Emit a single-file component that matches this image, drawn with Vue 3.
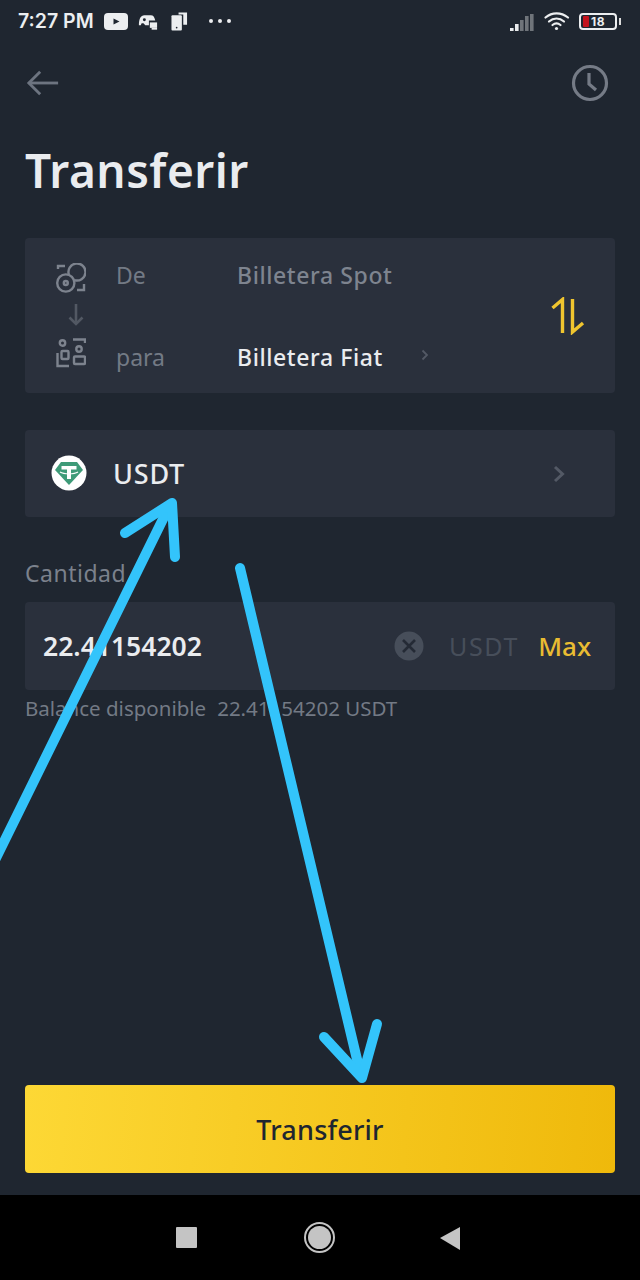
<script setup>
const signalBars = [
  { x: 0, h: 3, o: 1 },
  { x: 5, h: 7, o: 1 },
  { x: 10, h: 11, o: 0.4 },
  { x: 15, h: 15, o: 0.4 },
  { x: 20, h: 17, o: 0.4 }
]
</script>

<template>
  <div class="screen">
    <div class="app">
      <div class="status">
        <span class="time">7:27 PM</span>
        <svg class="st-yt" viewBox="0 0 24 17"><rect width="24" height="17" rx="4" fill="#eceef0"/><path d="M9.5 5.5 L15.5 8.5 L9.5 11.5Z" fill="#1f2630"/></svg>
        <svg class="st-game" viewBox="0 0 22 18"><path d="M1 13 C1 6 3 2 7 2 H14 C17 2 18 4 19 8 H12 V13 H8 L6 11 H4 L3 13Z" fill="#eceef0"/><circle cx="7" cy="7" r="1.6" fill="#1f2630"/><rect x="13" y="10" width="8" height="6" fill="#eceef0"/><path d="M15 16 V18 H21 V16Z" fill="#eceef0"/></svg>
        <svg class="st-sim" viewBox="0 0 18 20"><rect x="0.5" y="4" width="11" height="16" rx="1" fill="#eceef0"/><path d="M8 3 V1 H17 V14 H13 V3Z" fill="#eceef0"/><circle cx="6" cy="17" r="0.9" fill="#1f2630"/></svg>
        <span class="dots"><i></i><i></i><i></i></span>
        <span class="grow"></span>
        <svg class="st-signal" viewBox="0 0 25 19"><rect v-for="b in signalBars" :key="b.x" :x="b.x" :y="19 - b.h" width="3.6" :height="b.h" fill="#e8eaec" :opacity="b.o"/></svg>
        <svg class="st-wifi" viewBox="0 0 26 20" fill="none" stroke="#eceef0" stroke-width="2.2" stroke-linecap="round"><path d="M1.5 6.5 C8 1 17 1 24 6.5"/><path d="M5 10.5 C9.5 6.5 15.5 6.5 20 10.5"/><path d="M8.5 14 C11 12 14 12 16.500 14"/><circle cx="12.500" cy="17.500" r="1.600" fill="#eceef0" stroke="none"/></svg>
        <span class="battery"><span class="level"></span><span class="pct">18</span></span>
        <span class="nub"></span>
      </div>

      <div class="nav">
        <svg class="back" viewBox="0 0 36 28" fill="none" stroke="#6d7480" stroke-width="3"><path d="M34 14 H3"/><path d="M15 2 L3 14 L15 26"/></svg>
        <svg class="clock" viewBox="0 0 38 38" fill="none" stroke="#757b86" stroke-width="3.2"><circle cx="19" cy="19" r="16.500"/><path d="M18 9 V20 L25 26"/></svg>
      </div>

      <h1 class="title">Transferir</h1>

      <div class="card wallets">
        <div class="icons">
          <svg class="wicon" viewBox="0 0 30 30" fill="none" stroke="#7d838e" stroke-width="2.400">
            <path d="M13 12 A8.500 8.500 0 1 1 18.300 17.100"/>
            <circle cx="9.800" cy="20" r="8.600"/>
            <circle cx="9.800" cy="20" r="2"/>
            <path d="M2 6 V3 H9"/>
            <path d="M28 21 V27 H21"/>
          </svg>
          <svg class="warrow" viewBox="0 0 16 24" fill="none" stroke="#525863" stroke-width="2.600"><path d="M8 1 V21"/><path d="M1.500 14.500 L8 21 L14.500 14.500"/></svg>
          <svg class="wicon" viewBox="0 0 30 30" fill="none" stroke="#7d838e" stroke-width="2.400">
            <circle cx="6.500" cy="5" r="2.700"/>
            <rect x="5.500" y="13" width="7" height="8" rx="1"/>
            <circle cx="23" cy="11" r="2.700"/>
            <rect x="18" y="18.500" width="11" height="7.500" rx="1"/>
            <path d="M17 1.500 H29 V5"/>
            <path d="M1.500 15 V28 H13"/>
          </svg>
        </div>
        <div class="labels">
          <span>De</span>
          <span>para</span>
        </div>
        <div class="values">
          <span class="from">Billetera Spot</span>
          <span class="to">Billetera Fiat <svg class="chev small" viewBox="0 0 8 12" fill="none" stroke="#535965" stroke-width="1.800"><path d="M1.500 1.500 L6 6 L1.500 10.500"/></svg></span>
        </div>
        <svg class="swap" viewBox="0 0 34 38" fill="none" stroke="#f0c52f" stroke-width="3.400"><path d="M1.500 11 L11.500 2.500 V36"/><path d="M21.500 2 V35 L32 26"/></svg>
      </div>

      <div class="card coin">
        <svg class="tether" viewBox="0 0 36 36">
          <circle cx="18" cy="18" r="17.500" fill="#fff"/>
          <path d="M10 7 H26 L32 15 L18 30 L4 15Z" fill="#3e9b78"/>
          <path d="M10.500 11 H25.500 V14.500 H20 V24 H16 V14.500 H10.500Z" fill="#fff"/>
          <path d="M9 17 C13 19.500 23 19.500 27 17" fill="none" stroke="#fff" stroke-width="1.300"/>
        </svg>
        <span class="coin-name">USDT</span>
        <svg class="chev big" viewBox="0 0 12 18" fill="none" stroke="#535965" stroke-width="3"><path d="M2 2 L9.500 9 L2 16"/></svg>
      </div>

      <div class="label">Cantidad</div>
      <div class="card amount">
        <span class="amount-val">22.41154202</span>
        <span class="grow"></span>
        <svg class="clear" viewBox="0 0 30 30"><circle cx="15" cy="15" r="14.500" fill="#474e5a"/><path d="M9 9 L21 21 M21 9 L9 21" stroke="#242a35" stroke-width="2.600"/></svg>
        <span class="unit">USDT</span>
        <span class="max">Max</span>
      </div>
      <div class="balance"><span>Balance disponible</span><span>22.41154202 USDT</span></div>

      <div class="grow"></div>
      <button class="cta">Transferir</button>
    </div>

    <div class="sysnav">
      <span class="sq"></span>
      <span class="ring"><span></span></span>
      <svg class="tri" viewBox="0 0 22 24"><path d="M21 1 V24 L1 12Z" fill="#c4c4c4"/></svg>
    </div>

    <svg class="scribble" viewBox="0 0 640 1280" fill="none" stroke="#33c4fb" stroke-linecap="round" stroke-linejoin="round">
      <path d="M-6 862 L165 515" stroke-width="10"/>
      <path d="M125 533 L172 503 L175 557" stroke-width="10"/>
      <path d="M240 568 L360 1072" stroke-width="10"/>
      <path d="M324 1037 L362 1078 L377 1024" stroke-width="10"/>
    </svg>
  </div>
</template>

<style>
html, body { margin: 0; background: #000; }
</style>

<style scoped>
.screen {
  position: relative;
  width: 640px;
  height: 1280px;
  overflow: hidden;
  display: flex;
  flex-direction: column;
  font-family: "Noto Sans", "Open Sans", sans-serif;
  background: #000;
}
.app {
  height: 1195px;
  flex: none;
  box-sizing: border-box;
  background: #1f2630;
  padding: 0 25px 22px;
  display: flex;
  flex-direction: column;
}
.grow { flex: 1; }
.status {
  height: 42px;
  margin: 0 -7px;
  flex: none;
  display: flex;
  align-items: center;
  font-family: Inter, "Liberation Sans", sans-serif;
  color: #eceef0;
}
.time { font-size: 19.500px; font-weight: 600; width: 86px; white-space: nowrap; }
.st-yt { width: 24px; height: 17px; margin-right: 10px; }
.st-game { width: 20px; height: 17px; margin-right: 13px; }
.st-sim { width: 17px; height: 20px; margin-right: 21px; }
.dots { display: flex; gap: 5px; }
.dots i { width: 4px; height: 4px; border-radius: 50%; background: #eceef0; }
.st-signal { width: 25px; height: 19px; margin-right: 9px; }
.st-wifi { width: 26px; height: 20px; margin-right: 9px; }
.battery {
  box-sizing: border-box;
  width: 38px;
  height: 17px;
  border: 2px solid #eceef0;
  border-radius: 4px;
  display: flex;
  align-items: center;
  padding-left: 2px;
  gap: 2px;
}
.level { width: 6px; height: 11px; background: #c3121c; border-radius: 1px; }
.pct { font-size: 12px; font-weight: 700; letter-spacing: 0.5px; }
.nub { width: 2px; height: 7px; background: #ddd; margin-left: 2px; margin-right: 1px; }
.nav {
  height: 48px;
  margin-top: 17px;
  flex: none;
  display: flex;
  justify-content: space-between;
  align-items: center;
  padding-right: 6px;
  padding-left: 1px;
}
.back { width: 34px; height: 28px; }
.clock { width: 38px; height: 38px; }
.title {
  margin: 31px 0 0;
  font-size: 46px;
  letter-spacing: 0.5px;
  line-height: 64px;
  font-weight: 600;
  color: #eaecef;
  height: 100px;
  flex: none;
}
.card {
  background: #2a303c;
  border-radius: 4px;
  flex: none;
  display: flex;
  align-items: center;
  box-sizing: border-box;
}
.wallets { height: 155px; padding-left: 31px; padding-right: 30px; }
.icons { display: flex; flex-direction: column; align-items: center; width: 30px; }
.wicon { width: 30px; height: 30px; }
.warrow { width: 16px; height: 24px; margin: 10px 0 11px 10px; }
.labels, .values {
  display: flex;
  flex-direction: column;
  justify-content: space-between;
  height: 114px;
  font-size: 23px;
  line-height: 32px;
}
.labels { color: #737a85; width: 121px; margin-left: 30px; }
.values { font-weight: 500; flex: 1; letter-spacing: 0.6px; }
.from { color: #7e848f; }
.to { color: #eaecef; display: flex; align-items: center; }
.chev.small { width: 8px; height: 12px; margin-left: 38px; margin-top: -3px; }
.swap { width: 34px; height: 38px; }
.coin { height: 87px; margin-top: 37px; padding-left: 26px; padding-right: 50px; }
.tether { width: 36px; height: 36px; margin-top: -2px; }
.coin-name { font-size: 27px; font-weight: 500; letter-spacing: 0.8px; color: #eaecef; margin-left: 26px; flex: 1; }
.chev.big { width: 12px; height: 18px; }
.label { font-size: 23px; letter-spacing: 0.5px; line-height: 32px; color: #7b818c; margin-top: 40px; height: 45px; flex: none; }
.amount { height: 88px; padding: 0 24px 0 18px; }
.amount-val { font-size: 26.500px; font-weight: 600; color: #eaecef; }
.clear { width: 30px; height: 30px; margin-right: 25px; }
.unit { font-size: 25px; letter-spacing: 1.700px; color: #474e5a; margin-right: 19px; }
.max { font-size: 26px; font-weight: 500; color: #e9bc32; }
.balance {
  display: flex;
  gap: 11px;
  font-size: 20.500px;
  line-height: 36px;
  color: #737a85;
  flex: none;
}
.cta {
  height: 88px;
  flex: none;
  border: none;
  border-radius: 4px;
  background: linear-gradient(95deg, #fdd835 0%, #efb90b 100%);
  color: #1f2630;
  font: 500 27px "Noto Sans", sans-serif;
  letter-spacing: 0.2px;
}
.sysnav {
  flex: 1;
  position: relative;
  display: flex;
  align-items: center;
  padding-left: 176px;
}
.sq { width: 21px; height: 21px; background: #c4c4c4; border-radius: 1px; }
.ring {
  box-sizing: border-box;
  width: 31px;
  height: 31px;
  border: 2px solid #c4c4c4;
  border-radius: 50%;
  margin-left: 107px;
  display: flex;
  align-items: center;
  justify-content: center;
}
.ring span { width: 23px; height: 23px; border-radius: 50%; background: #c4c4c4; }
.tri { width: 22px; height: 24px; margin-left: 104px; }
.scribble { position: absolute; inset: 0; width: 640px; height: 1280px; pointer-events: none; }
</style>
